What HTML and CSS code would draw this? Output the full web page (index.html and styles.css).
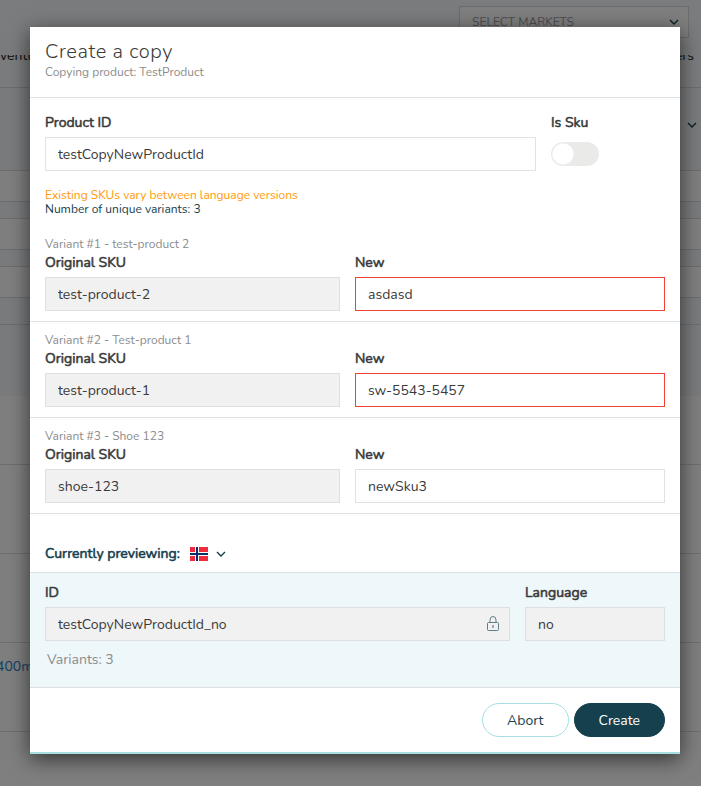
FILE: index.html
```html
<!DOCTYPE html>
<html lang="en">
<head>
<meta charset="utf-8">
<meta name="viewport" content="width=device-width, initial-scale=1">
<title>Create a copy</title>
<link rel="stylesheet" href="styles.css">
</head>
<body>
<div class="page">
  <header class="topbar">
    <div class="markets">
      <select class="markets-select" aria-label="Markets"><option>SELECT MARKETS</option></select>
      <svg class="chevron markets-chevron" viewBox="0 0 10 7" aria-hidden="true"><path d="M1 1l4 4 4-4"/></svg>
    </div>
  </header>
  <nav class="tabs"><a href="#">ventu</a><a href="#">ers</a></nav>
  <section class="summary"><svg class="chevron" viewBox="0 0 10 7" aria-hidden="true"><path d="M1 1l4 4 4-4"/></svg></section>
  <div class="band"></div>
  <div class="band"></div>
  <div class="band"></div>
  <div class="list-head"></div>
  <div class="list">
    <div class="list-row"></div>
    <div class="list-row"></div>
    <div class="list-row"></div>
    <div class="list-row"><a href="#">400m</a></div>
    <div class="list-row"></div>
  </div>
</div>

<div class="overlay">
  <form class="modal" role="dialog" aria-labelledby="title">
    <header class="modal-head">
      <h1 id="title">Create a copy</h1>
      <p>Copying product: TestProduct</p>
    </header>

    <section class="product">
      <div class="product-grid">
        <div class="field">
          <label for="pid">Product ID</label>
          <input class="text" id="pid" type="text" value="testCopyNewProductId">
        </div>
        <div class="field">
          <label for="sku">Is Sku</label>
          <input class="switch" id="sku" type="checkbox" role="switch">
        </div>
      </div>
      <div class="notes">
        <p class="warning">Existing SKUs vary between language versions</p>
        <p>Number of unique variants: 3</p>
      </div>
    </section>

    <section class="variant">
      <p class="meta">Variant #1 - test-product 2</p>
      <div class="variant-grid">
        <div class="field"><label for="o1">Original SKU</label><input class="text" id="o1" type="text" value="test-product-2" readonly></div>
        <div class="field"><label for="n1">New</label><input class="text invalid" id="n1" type="text" value="asdasd"></div>
      </div>
    </section>
    <section class="variant">
      <p class="meta">Variant #2 - Test-product 1</p>
      <div class="variant-grid">
        <div class="field"><label for="o2">Original SKU</label><input class="text" id="o2" type="text" value="test-product-1" readonly></div>
        <div class="field"><label for="n2">New</label><input class="text invalid" id="n2" type="text" value="sw-5543-5457"></div>
      </div>
    </section>
    <section class="variant">
      <p class="meta">Variant #3 - Shoe 123</p>
      <div class="variant-grid">
        <div class="field"><label for="o3">Original SKU</label><input class="text" id="o3" type="text" value="shoe-123" readonly></div>
        <div class="field"><label for="n3">New</label><input class="text" id="n3" type="text" value="newSku3"></div>
      </div>
    </section>

    <div class="previewing">
      <span class="strong">Currently previewing:</span>
      <button class="language" type="button" aria-label="Norwegian">
        <svg class="flag" viewBox="0 0 18 14" aria-hidden="true">
          <path fill="#ef2b3d" d="M0 0h18v14H0z"/>
          <path fill="#fff" d="M5 0h4v14H5zM0 5h18v4H0z"/>
          <path fill="#0a2f6b" d="M6 0h2v14H6zM0 6h18v2H0z"/>
        </svg>
        <svg class="chevron" viewBox="0 0 10 7" aria-hidden="true"><path d="M1 1l4 4 4-4"/></svg>
      </button>
    </div>

    <section class="preview">
      <div class="preview-grid">
        <div class="field">
          <label for="id">ID</label>
          <div class="locked">
            <input class="text" id="id" type="text" value="testCopyNewProductId_no" readonly>
            <svg class="lock" viewBox="0 0 12 15" aria-hidden="true"><path d="M3 6.500V4a3 3.500 0 0 1 6 0v2.500M1.500 6.500h9a1 1 0 0 1 1 1v6a1 1 0 0 1-1 1h-9a1 1 0 0 1-1-1v-6a1 1 0 0 1 1-1z"/><path class="keyhole" d="M6 9v3"/></svg>
          </div>
        </div>
        <div class="field"><label for="lang">Language</label><input class="text" id="lang" type="text" value="no" readonly></div>
      </div>
      <p class="count">Variants: 3</p>
    </section>

    <footer class="actions">
      <button class="btn" type="button">Abort</button>
      <button class="btn primary" type="submit">Create</button>
    </footer>
  </form>
</div>
</body>
</html>
```
FILE: styles.css
```css
* { box-sizing: border-box; }
body {
  margin: 0;
  background: #fff;
  color: #3a3a3a;
  font: 14px/22px Nunito, "Open Sans", sans-serif;
}
h1, p { margin: 0; }
input, select, button { font: inherit; color: inherit; }
a { text-decoration: none; }

.chevron {
  width: 10px;
  height: 7px;
  fill: none;
  stroke: #15404d;
  stroke-width: 1.4;
}

/* Page behind the dialog */
.page { height: 100vh; overflow: hidden; }
.topbar {
  height: 55px;
  padding: 6px 12px 0;
  background: #f6f8fb;
  display: flex;
  justify-content: flex-end;
  align-items: flex-start;
}
.markets { position: relative; width: 230px; }
.markets-select {
  width: 100%;
  height: 32px;
  padding: 0 12px;
  border: 1px solid #d5d9e2;
  border-radius: 0;
  background: #fff;
  color: #9a9ca3;
  font-size: 12px;
  appearance: none;
}
.markets-chevron { position: absolute; right: 10px; top: 13px; }
.tabs {
  height: 33px;
  padding: 0 7px 0 0;
  overflow: hidden;
  border-bottom: 1px solid #d8dbe0;
  background: #f6f8fb;
  display: flex;
  justify-content: space-between;
  line-height: 2px;
}
.tabs a { color: #222; }
.summary {
  height: 83px;
  padding: 33px 4px 0;
  border-bottom: 1px solid #d8dbe0;
  background: #f2f6fa;
  text-align: right;
  line-height: 7px;
}
.band {
  height: 48px;
  border-bottom: 1px solid #d8dbe0;
  background: linear-gradient(#fff 30px, #d8dbe0 30px, #d8dbe0 31px, #f2f6fa 31px);
}
.band:nth-of-type(3) { height: 58px; }
.list-head { height: 71px; background: #f2f6fa; }
.list-row {
  height: 89px;
  padding-top: 13px;
  border-bottom: 1px solid #dcdcdc;
}
.list-row:first-child { height: 69px; }
.list-row a { margin-left: -4px; color: #2b7fc4; }

/* Dialog */
.overlay {
  position: absolute;
  inset: 0;
  padding: 27px 21px 32px 30px;
  background: rgba(0, 0, 0, .5);
}
.modal {
  border-bottom: 2px solid #a5dfe2;
  background: #fff;
  box-shadow: 0 5px 20px rgba(0, 0, 0, .6);
}
.modal-head {
  height: 71px;
  padding: 12px 15px;
  border-bottom: 1px solid #e1e2e4;
}
.modal-head h1 {
  font-size: 20px;
  line-height: 25px;
  font-weight: 300;
  letter-spacing: .03em;
}
.modal-head p { color: #8c8c8c; font-size: 12px; line-height: 16px; }

.field { display: flex; flex-direction: column; gap: 4px; min-width: 0; }
.field label, .strong { -webkit-text-stroke: .04em currentColor; }
.field label { line-height: 21px; }
.text {
  width: 100%;
  height: 34px;
  padding: 0 12px;
  border: 1px solid #e0e2e8;
  border-radius: 0;
  background: #fff;
  outline: 0;
}
.text:read-only { background: #f1f1f1; border-color: #dddfe5; }
.text.invalid { border-color: #f04134; }

.product { padding: 14px 15px 10px; }
.product-grid { display: grid; grid-template-columns: 1fr 114px; gap: 15px; }
.switch {
  appearance: none;
  width: 48px;
  height: 24px;
  margin: 5px 0;
  border-radius: 12px;
  background: radial-gradient(circle at 12px 12px, #fff 10px, #eaeae8 11px);
}
.notes { margin-top: 17px; color: #15404d; font-size: 12px; line-height: 14px; }
.warning { color: #ff9a0a; }

.variant { padding: 10px 15px; border-bottom: 1px solid #e1e2e4; }
.meta { color: #8c8c8c; font-size: 12px; line-height: 16px; }
.variant-grid { display: grid; grid-template-columns: 295fr 310fr; gap: 15px; }

.previewing {
  padding: 29px 15px 7px;
  display: flex;
  align-items: center;
  gap: 10px;
  color: #15404d;
}
.language {
  padding: 0;
  border: 0;
  background: none;
  display: flex;
  align-items: center;
  gap: 8px;
  color: inherit;
}
.flag { width: 18px; height: 14px; }

.preview {
  padding: 9px 15px 16px;
  border: solid #dddfe1;
  border-width: 1px 0;
  background: #eef7f9;
}
.preview-grid { display: grid; grid-template-columns: 1fr 140px; gap: 15px; }
.locked { position: relative; }
.locked .text { display: block; padding-right: 34px; }
.lock {
  position: absolute;
  right: 11px;
  top: 9px;
  width: 12px;
  height: 15px;
  fill: none;
  stroke: #5b7f89;
}
.keyhole { stroke-width: 2; opacity: .6; }
.count { margin: 8px 2px 0; color: #8c8c8c; }

.actions { padding: 15px; display: flex; justify-content: flex-end; gap: 5px; }
.btn {
  height: 34px;
  padding: 1px 24px 0;
  border: 1px solid #a5dfe2;
  border-radius: 17px;
  background: #fff;
  color: #15404d;
}
.btn.primary { border-color: #15404d; background: #15404d; color: #fff; }
```
